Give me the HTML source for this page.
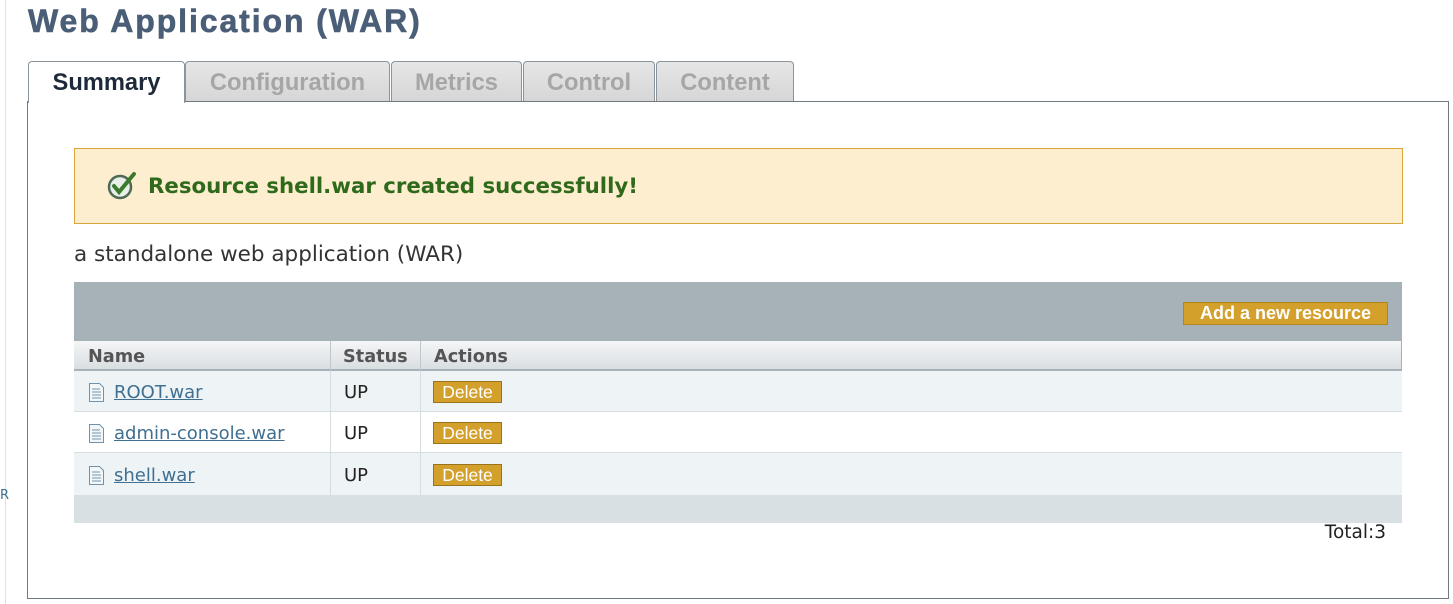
<!DOCTYPE html>
<html><head><style>
body{margin:0;width:1453px;height:604px;background:#fff;position:relative;overflow:hidden;font-family:"DejaVu Sans",Verdana,sans-serif;}
.a{position:absolute}
.tab{position:absolute;top:61px;height:40px;background:linear-gradient(#e6e6e6,#d6d6d6);border:1px solid #8a949a;border-bottom:none;border-radius:4px 4px 0 0;font:bold 23.7px "Liberation Sans",Arial,sans-serif;color:#a6a6a6;text-align:center;line-height:42px;box-sizing:border-box}
.th{position:absolute;top:342px;height:30px;font-weight:bold;font-size:17.7px;color:#555;line-height:31px;box-sizing:border-box}
.row{position:absolute;left:74px;width:1328px;height:41px;border-bottom:1px solid #d5dde2;box-sizing:border-box}
.c{position:absolute;font-size:18px;line-height:43px;color:#222}
.c a{color:#3f6f91;text-decoration:underline}
.del{position:absolute;left:359px;top:10px;width:69px;height:22px;background:#d4a02c;border:1px solid #9a7418;box-sizing:border-box;color:#fff;font:17.5px "Liberation Sans",Arial,sans-serif;text-align:center;line-height:21px}
.vl{position:absolute;top:0;bottom:0;width:1px;background:#d5dde2}
</style></head><body>
<div class="a" style="left:5px;top:0;width:1px;height:604px;background:#dde3ea"></div>
<div class="a" style="left:0;top:488px;font-size:13px;color:#3f6f91">R</div>
<div class="a" style="left:28px;top:3px;font:bold 32px 'Liberation Sans',Arial,sans-serif;letter-spacing:1.9px;color:#4b5e77;-webkit-text-stroke:0.6px #4b5e77">Web Application (WAR)</div>
<div class="a" style="left:27px;top:101px;width:1422px;height:498px;border:1px solid #6f7a80;box-sizing:border-box"></div>
<div class="tab" style="left:28px;width:157px;background:#fff;color:#1e2a3a;height:42px;z-index:2">Summary</div>
<div class="tab" style="left:185px;width:205px">Configuration</div>
<div class="tab" style="left:391px;width:131px">Metrics</div>
<div class="tab" style="left:523px;width:132px">Control</div>
<div class="tab" style="left:656px;width:138px">Content</div>
<div class="a" style="left:74px;top:148px;width:1329px;height:76px;background:#fdeecf;border:1px solid #d9a73a;box-sizing:border-box"></div>
<svg class="a" style="left:106px;top:170px" width="34" height="32" viewBox="0 0 34 32"><circle cx="14" cy="17" r="11" fill="#e8efe8" stroke="#4e6a55" stroke-width="2.5"/><path d="M8 16 L13 22 L28 4" fill="none" stroke="#3b7a2c" stroke-width="4" stroke-linecap="round"/></svg>
<div class="a" style="left:148px;top:174px;font-weight:bold;font-size:21.3px;color:#2f6a1c">Resource shell.war created successfully!</div>
<div class="a" style="left:74px;top:242px;font-size:21.5px;color:#333">a standalone web application (WAR)</div>
<div class="a" style="left:74px;top:282px;width:1328px;height:59px;background:#a6b2b8"></div>
<div class="a" style="left:1183px;top:302px;width:205px;height:23px;background:#d4a02c;border:1px solid #b3861d;box-sizing:border-box;color:#fff;font:bold 18px 'Liberation Sans',Arial,sans-serif;text-align:center;line-height:21px">Add a new resource</div>
<div class="a" style="left:74px;top:341px;width:1328px;height:31px;background:linear-gradient(#f4f6f7,#d9dee1);border-bottom:3px solid #a6b2b8;box-sizing:border-box"></div>
<div class="a" style="left:330px;top:341px;width:1px;height:31px;background:#bfc7cc"></div>
<div class="a" style="left:420px;top:341px;width:1px;height:31px;background:#bfc7cc"></div>
<div class="a" style="left:1401px;top:341px;width:1px;height:31px;background:#a6b2b8"></div>
<div class="th" style="left:88px">Name</div>
<div class="th" style="left:343px">Status</div>
<div class="th" style="left:434px">Actions</div>
<div class="row" style="top:371px;background:#eef3f6"><div class="vl" style="left:256px"></div><div class="vl" style="left:346px"></div></div>
<div class="row" style="top:412px;background:#fff"><div class="vl" style="left:256px"></div><div class="vl" style="left:346px"></div></div>
<div class="row" style="top:453px;background:#eef3f6;height:42px;border:none"><div class="vl" style="left:256px"></div><div class="vl" style="left:346px"></div></div>
<div class="a" style="left:74px;top:495px;width:1328px;height:28px;background:#d8e0e4"></div>
<div class="a" style="left:74px;top:371px;width:1328px">
 <div class="a" style="top:0;left:0;width:1328px;height:41px">
  <svg class="a" style="left:14px;top:11px" width="17" height="21" viewBox="0 0 17 21"><path d="M1.5 1.5h10l4 4v14h-14z" fill="#f4f7f9" stroke="#6f93ac"/><path d="M4 7h8M4 10h9M4 13h9M4 16h9" stroke="#6f93ac"/></svg>
  <div class="c" style="left:40px;top:0"><a>ROOT.war</a></div><div class="c" style="left:270px">UP</div><div class="del">Delete</div></div>
 <div class="a" style="top:41px;left:0;width:1328px;height:41px">
  <svg class="a" style="left:14px;top:11px" width="17" height="21" viewBox="0 0 17 21"><path d="M1.5 1.5h10l4 4v14h-14z" fill="#f4f7f9" stroke="#6f93ac"/><path d="M4 7h8M4 10h9M4 13h9M4 16h9" stroke="#6f93ac"/></svg>
  <div class="c" style="left:40px;top:0"><a>admin-console.war</a></div><div class="c" style="left:270px">UP</div><div class="del">Delete</div></div>
 <div class="a" style="top:83px;left:0;width:1328px;height:41px">
  <svg class="a" style="left:14px;top:11px" width="17" height="21" viewBox="0 0 17 21"><path d="M1.5 1.5h10l4 4v14h-14z" fill="#f4f7f9" stroke="#6f93ac"/><path d="M4 7h8M4 10h9M4 13h9M4 16h9" stroke="#6f93ac"/></svg>
  <div class="c" style="left:40px;top:0"><a>shell.war</a></div><div class="c" style="left:270px">UP</div><div class="del">Delete</div></div>
</div>
<div class="a" style="right:67px;top:522px;font-size:18.5px;color:#222">Total:3</div>
</body></html>
